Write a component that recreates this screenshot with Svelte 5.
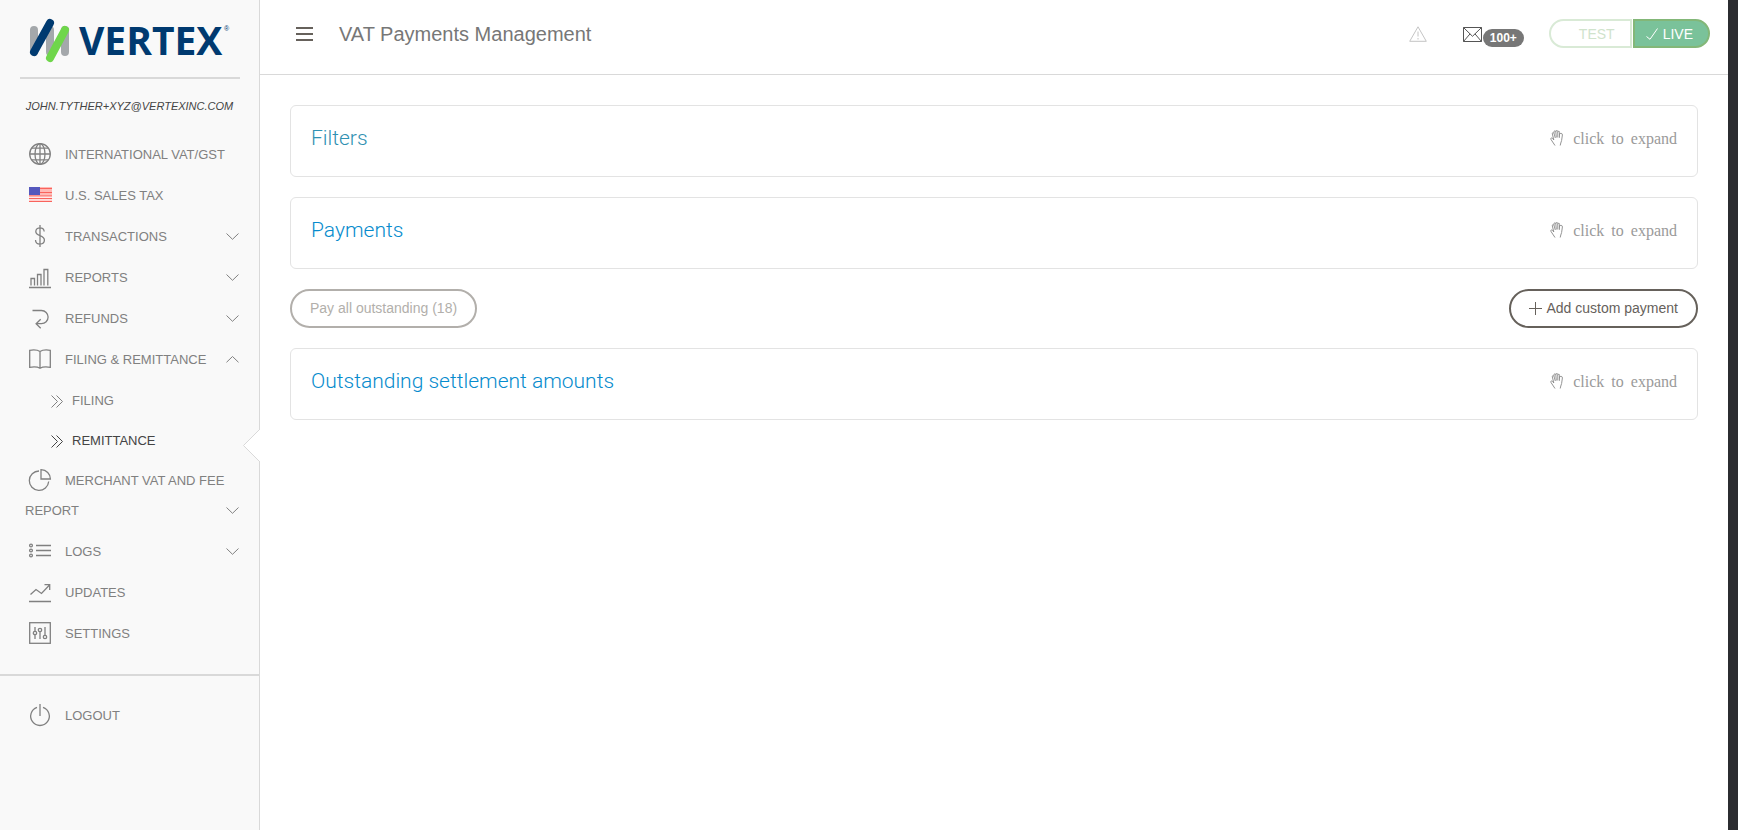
<script lang="ts">
  interface SubItem {
    label: string;
    active?: boolean;
  }

  interface NavItem {
    label: string;
    icon: string;
    expandable?: boolean;
    children?: SubItem[];
  }

  const items: NavItem[] = [
    { label: "International VAT/GST", icon: "globe" },
    { label: "U.S. Sales Tax", icon: "flag" },
    { label: "Transactions", icon: "dollar", expandable: true },
    { label: "Reports", icon: "bars", expandable: true },
    { label: "Refunds", icon: "back", expandable: true },
    {
      label: "Filing & Remittance",
      icon: "book",
      expandable: true,
      children: [{ label: "Filing" }, { label: "Remittance", active: true }],
    },
    { label: "Merchant VAT and Fee Report", icon: "pie", expandable: true },
    { label: "Logs", icon: "list", expandable: true },
    { label: "Updates", icon: "trend" },
    { label: "Settings", icon: "sliders" },
  ];

  const outstanding = 18;
  let live = $state(true);
</script>

{#snippet icon(name: string)}
  <svg class="icon" viewBox="0 0 22 22" aria-hidden="true">
    {#if name === "globe"}
      <circle cx="11" cy="11" r="10.3" />
      <ellipse cx="11" cy="11" rx="5" ry="10.3" />
      <path d="M11 .7v20.6M.7 11h20.6M2.6 5.2h16.8M2.6 16.8h16.8" />
    {:else if name === "flag"}
      <rect class="fill" x="0" y="3" width="23" height="15" fill="#ffb9b4" />
      <path d="M11 4.5h12M11 8.5h12M0 12h23M0 14.5h23M0 17.3h23" stroke="#f9635c" stroke-width="1.2" />
      <path d="M0 13.2h23M0 16h23" stroke="#fff" stroke-width="1" />
      <rect class="fill" x="0" y="3" width="11" height="8" fill="#5558bd" />
    {:else if name === "dollar"}
      <path d="M11 0v22M15.2 6.5C15 4 13.3 2.8 11 2.8S6.8 4.2 6.8 6.6c0 5.2 8.6 2.8 8.6 8.5 0 2.5-1.8 4-4.4 4s-4.4-1.4-4.5-4.2" />
    {:else if name === "bars"}
      <path d="M0 21.5h22M2 19.500v-7h3.500v7M8.500 19.500v-11H12v11M15 19.500v-16h3.800v16" />
    {:else if name === "back"}
      <path d="M3.500 3.500h9a6.400 6.400 0 0 1 0 13.200H7.500M11.700 12.200l-4.600 4.500 4.600 4.500" />
    {:else if name === "book"}
      <path d="M11 3.500C8 1.500 4 1.800.7 2.300v17C4 18.800 8 18.500 11 20.200c3-1.700 7-1.400 10.300-.9v-17C18 1.800 14 1.500 11 3.500zv16.500" />
    {:else if name === "pie"}
      <path d="M10 2a9.700 9.700 0 1 0 9.700 10.500M12 .7V10h9.400C21.300 4.800 17.500.9 12 .7z" />
    {:else if name === "list"}
      <path d="M7 5.500h15M7 10.500h15M7 15.500h15" />
      <circle cx="2" cy="5.500" r="1.400" />
      <circle cx="2" cy="10.500" r="1.400" />
      <circle cx="2" cy="15.500" r="1.400" />
    {:else if name === "trend"}
      <path d="M0 20.500h22M1.500 13.500 7 8.500l5.500 4L20.500 4M15.500 3.700h5.200V9" />
    {:else if name === "sliders"}
      <rect x=".7" y=".7" width="20.600" height="20.600" />
      <path d="M6 5v4.300M6 12.700V17M11 9.700V17M16 5v8.300" />
      <circle cx="6" cy="11" r="1.700" />
      <circle cx="11" cy="8" r="1.700" />
      <circle cx="16" cy="15" r="1.700" />
    {:else if name === "power"}
      <path d="M8 3.400a9.300 9.300 0 1 0 6 0M11 0v12" />
    {/if}
  </svg>
{/snippet}

{#snippet panel(title: string, tone: string)}
  <section class="panel">
    <h2 class={tone}>{title}</h2>
    <button class="expand" type="button">
      <svg viewBox="0 0 13 16" aria-hidden="true">
        <path
          d="M5 15.500 1 9.500C.3 8.300 1.700 7.200 2.600 8.300L3.800 10 2.300 3.800C2 2.400 3.600 2.200 4 3.400L5.300 8M4 3.400V1.800C4 .4 5.700.4 5.800 1.700L6.300 7.500M5.800 1.700C5.900.1 7.700.1 7.800 1.500V7.500M7.800 2.300C8 .8 9.700.9 9.600 2.400L9.400 7.800M9.500 4.500C10 2.800 12.600 3 12.400 5L11.600 10.500C11.300 12.500 10.200 13.500 10.200 15.500"
        />
      </svg>
      <span>click</span> <span>to</span> <span>expand</span>
    </button>
  </section>
{/snippet}

<div class="layout">
  <aside class="sidebar">
    <div class="brand">
      <svg viewBox="0 -14 203 64" role="img" aria-label="Vertex">
        <g fill="none" stroke-width="8" stroke-linecap="round">
          <path d="M4 12v22M20 12v22M35 12v22" stroke="#a4a8ab" />
          <path d="M4 34 20 5" stroke="#003a70" />
          <path d="M20 40 35 12" stroke="#6fd64b" />
        </g>
        <text class="wordmark" x="49" y="37">VERTEX</text>
        <text class="registered" x="194" y="13">®</text>
      </svg>
    </div>
    <p class="account">john.tyther+xyz@vertexinc.com</p>

    <nav>
      <ul>
        {#each items as item}
          <li>
            <a class="item" href="#{item.icon}">
              <span class="label">{@render icon(item.icon)}{item.label}</span>
              {#if item.expandable}
                <svg class="chevron" class:up={item.children} viewBox="0 0 13 7" aria-hidden="true">
                  <path d="M.5.500 6.500 6.300 12.500.500" />
                </svg>
              {/if}
            </a>
            {#if item.children}
              <ul>
                {#each item.children as child}
                  <li class="child">
                    <a class:active={child.active} href="#{child.label}">
                      <svg class="angles" viewBox="0 0 12 13" aria-hidden="true">
                        <path d="M.5.500l6 6-6 6M5.500.500l6 6-6 6" />
                      </svg>
                      {child.label}
                    </a>
                    {#if child.active}
                      <svg class="notch" viewBox="0 0 17 33" aria-hidden="true">
                        <path d="M17 0 .5 16.500 17 33" />
                      </svg>
                    {/if}
                  </li>
                {/each}
              </ul>
            {/if}
          </li>
        {/each}
      </ul>
    </nav>

    <div class="session">
      <a class="item" href="#logout">
        <span class="label">{@render icon("power")}Logout</span>
      </a>
    </div>
  </aside>

  <div class="page">
    <header>
      <button class="menu" type="button" aria-label="Toggle menu">
        <svg viewBox="0 0 17 14" aria-hidden="true">
          <path d="M0 1h17M0 7h17M0 13h17" />
        </svg>
      </button>
      <h1>VAT Payments Management</h1>

      <button class="alerts" type="button" aria-label="Alerts">
        <svg viewBox="0 0 18 16" aria-hidden="true">
          <path d="M9 .8 17.300 15.300H.7zM9 5.500v5M9 12v1.500" />
        </svg>
      </button>
      <button class="mail" type="button" aria-label="Messages">
        <svg viewBox="0 0 19 15" aria-hidden="true">
          <path d="M.5.500h18v14H.5zM.5.500l9 8.800 9-8.800M.5 14.500l6.500-7.600M18.500 14.500 12 6.900" />
        </svg>
        <span class="badge">100+</span>
      </button>
      <div class="mode">
        <button class="test" type="button" aria-pressed={!live} onclick={() => (live = false)}>TEST</button>
        <button class="live" type="button" aria-pressed={live} onclick={() => (live = true)}>
          <svg viewBox="0 0 12 12" aria-hidden="true">
            <path d="M.5 8.500 4 11.300 11.500.500" />
          </svg>
          LIVE
        </button>
      </div>
    </header>

    <main>
      {@render panel("Filters", "muted")}
      {@render panel("Payments", "bright")}
      <div class="actions">
        <button class="pill" type="button" disabled>Pay all outstanding ({outstanding})</button>
        <button class="pill" type="button">
          <svg viewBox="0 0 13 13" aria-hidden="true">
            <path d="M6.500 0v13M0 6.500h13" />
          </svg>
          Add custom payment
        </button>
      </div>
      {@render panel("Outstanding settlement amounts", "bright")}
    </main>
  </div>
</div>

<style>
  :global(body) {
    margin: 0;
    background: #fff;
    font-family: "Helvetica Neue", "Liberation Sans", Arial, sans-serif;
  }

  .layout {
    display: flex;
    box-sizing: border-box;
    min-height: 100vh;
    border-right: 10px solid #2b2c30;
  }

  button {
    padding: 0;
    border: 0;
    background: none;
    color: inherit;
    font: inherit;
    cursor: pointer;
  }

  svg {
    fill: none;
    stroke: currentColor;
  }

  ul {
    margin: 0;
    padding: 0;
    list-style: none;
  }

  .sidebar {
    box-sizing: border-box;
    width: 260px;
    flex-shrink: 0;
    border-right: 1px solid #d9d9d9;
    background: #f9f9f9;
    color: #808080;
    font-size: 13px;
    text-transform: uppercase;
  }

  .brand {
    margin: 0 19px 0 20px;
    padding: 4px 7px 9px 10px;
    border-bottom: 2px solid #d9d9d9;
  }

  .brand svg {
    display: block;
    width: 203px;
    height: 64px;
    overflow: visible;
  }

  .wordmark {
    fill: #003a70;
    stroke: none;
    font: 700 39px "Open Sans", sans-serif;
  }

  .registered {
    fill: #003a70;
    stroke: none;
    font-size: 7px;
  }

  .account {
    margin: 17px 0 19px;
    color: #444;
    font-size: 11px;
    font-style: italic;
    line-height: 20px;
    text-align: center;
  }

  a {
    color: inherit;
    text-decoration: none;
  }

  .item {
    display: flex;
    align-items: flex-end;
    padding: 5px 20px 6px 25px;
    line-height: 30px;
  }

  .label {
    flex: 1;
  }

  .icon {
    width: 22px;
    height: 22px;
    margin: 0 14px 0 4px;
    overflow: visible;
    stroke-width: 1.3;
    vertical-align: -6px;
  }

  .icon .fill {
    stroke: none;
  }

  .chevron {
    width: 13px;
    height: 7px;
    padding: 11px 0 12px;
    flex-shrink: 0;
  }

  .chevron.up path {
    transform: rotate(180deg);
    transform-box: fill-box;
    transform-origin: center;
  }

  .child {
    position: relative;
  }

  .child a {
    display: flex;
    align-items: center;
    gap: 9px;
    padding: 5px 20px 5px 51px;
    line-height: 30px;
  }

  .child .active {
    color: #444;
  }

  .angles {
    width: 12px;
    height: 13px;
  }

  .notch {
    position: absolute;
    top: 8px;
    right: -1px;
    width: 17px;
    height: 33px;
    fill: #fff;
    stroke: #d9d9d9;
  }

  .session {
    margin-top: 19px;
    padding-top: 20px;
    border-top: 2px solid #d9d9d9;
  }

  .page {
    flex: 1;
    min-width: 0;
  }

  header {
    display: flex;
    align-items: flex-start;
    padding: 19px 18px 25px 36px;
    border-bottom: 1px solid #d9d9d9;
  }

  header > button {
    height: 30px;
  }

  .menu {
    color: #66615b;
  }

  .menu svg {
    display: block;
    width: 17px;
    height: 14px;
    stroke-width: 2;
  }

  h1 {
    flex: 1;
    margin: 0 0 0 26px;
    color: #777;
    font-size: 20px;
    font-weight: 400;
    line-height: 30px;
  }

  .alerts {
    margin-right: 36px;
    color: #c4c4c4;
  }

  .alerts svg {
    display: block;
    width: 18px;
    height: 16px;
  }

  .mail {
    display: flex;
    align-items: center;
    gap: 1px;
    margin-right: 25px;
    color: #555;
  }

  .mail svg {
    width: 19px;
    height: 15px;
  }

  .badge {
    margin-top: 8px;
    padding: 0 7px;
    border-radius: 9px;
    background: #777;
    color: #fff;
    font-size: 12px;
    font-weight: 700;
    line-height: 18px;
  }

  .mode {
    display: flex;
    gap: 1px;
    font-size: 14px;
  }

  .mode button {
    box-sizing: border-box;
    height: 29px;
  }

  .test {
    padding: 0 15px 0 28px;
    border: 2px solid #d9ead6;
    border-radius: 15px 0 0 15px;
    color: #d0e3cc;
  }

  .live {
    display: flex;
    align-items: center;
    gap: 5px;
    padding: 0 15px 0 11px;
    border: 2px solid #83b778;
    border-radius: 0 15px 15px 0;
    background: #7ac29a;
    color: #fff;
  }

  .live svg {
    width: 12px;
    height: 12px;
  }

  main {
    display: flex;
    flex-direction: column;
    gap: 20px;
    padding: 30px;
  }

  .panel {
    display: flex;
    justify-content: space-between;
    align-items: flex-start;
    padding: 18px 20px 22px;
    border: 1px solid #e3e3e3;
    border-radius: 6px;
  }

  h2 {
    margin: 0;
    font-family: Roboto, "Liberation Sans", sans-serif;
    font-size: 21px;
    font-weight: 300;
    line-height: 29px;
  }

  .muted {
    color: #3091b2;
  }

  .bright {
    color: #068bcd;
  }

  .expand {
    display: flex;
    align-items: center;
    gap: 7px;
    color: #9a9a9a;
    font-family: "Liberation Serif", serif;
    font-size: 16px;
    line-height: 30px;
  }

  .expand svg {
    width: 13px;
    height: 16px;
    margin: 0 3px 3px 0;
    color: #888;
    stroke-width: 0.9;
  }

  .actions {
    display: flex;
    justify-content: space-between;
  }

  .pill {
    display: flex;
    align-items: center;
    gap: 4px;
    padding: 0 18px;
    border: 2px solid #66615b;
    border-radius: 20px;
    color: #66615b;
    font-size: 14px;
    line-height: 35px;
  }

  .pill:disabled {
    border-color: #b2afab;
    color: #b2afab;
    cursor: default;
  }

  .pill svg {
    width: 13px;
    height: 13px;
  }
</style>
